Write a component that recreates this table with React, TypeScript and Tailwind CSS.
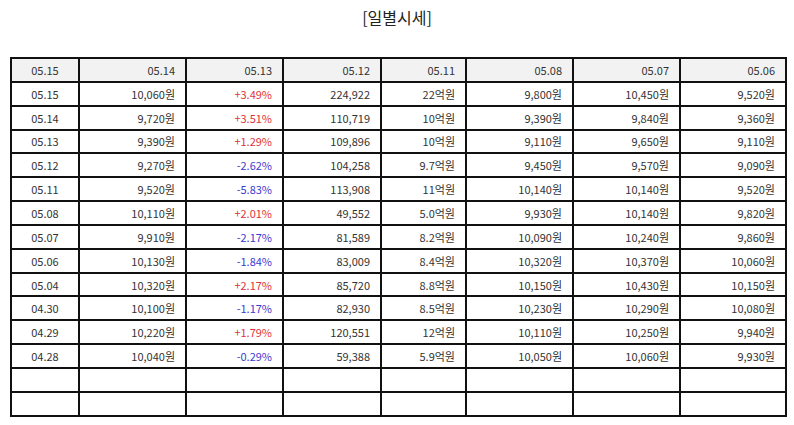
const headers = ["05.15", "05.14", "05.13", "05.12", "05.11", "05.08", "05.07", "05.06"];

const rows: string[][] = [
  ["05.15", "10,060원", "+3.49%", "224,922", "22억원", "9,800원", "10,450원", "9,520원"],
  ["05.14", "9,720원", "+3.51%", "110,719", "10억원", "9,390원", "9,840원", "9,360원"],
  ["05.13", "9,390원", "+1.29%", "109,896", "10억원", "9,110원", "9,650원", "9,110원"],
  ["05.12", "9,270원", "-2.62%", "104,258", "9.7억원", "9,450원", "9,570원", "9,090원"],
  ["05.11", "9,520원", "-5.83%", "113,908", "11억원", "10,140원", "10,140원", "9,520원"],
  ["05.08", "10,110원", "+2.01%", "49,552", "5.0억원", "9,930원", "10,140원", "9,820원"],
  ["05.07", "9,910원", "-2.17%", "81,589", "8.2억원", "10,090원", "10,240원", "9,860원"],
  ["05.06", "10,130원", "-1.84%", "83,009", "8.4억원", "10,320원", "10,370원", "10,060원"],
  ["05.04", "10,320원", "+2.17%", "85,720", "8.8억원", "10,150원", "10,430원", "10,150원"],
  ["04.30", "10,100원", "-1.17%", "82,930", "8.5억원", "10,230원", "10,290원", "10,080원"],
  ["04.29", "10,220원", "+1.79%", "120,551", "12억원", "10,110원", "10,250원", "9,940원"],
  ["04.28", "10,040원", "-0.29%", "59,388", "5.9억원", "10,050원", "10,060원", "9,930원"],
];

const widths = [68, 107, 97, 98, 85, 107, 107, 106];

function cellClass(i: number) {
  return i === 0
    ? "border-2 border-[#111] h-[23.85px] p-0 text-center"
    : "border-2 border-[#111] h-[23.85px] p-0 pr-[10px] text-right";
}

export default function App() {
  return (
    <div
      className="w-[794px] h-[425px] bg-white text-[#333]"
      style={{ fontFamily: '"Noto Sans CJK KR", "Noto Sans", sans-serif' }}
    >
      <h1 className="pt-[6px] text-center text-[16px] leading-[22px] font-normal text-[#222]">[일별시세]</h1>

      <table className="mt-[29px] ml-[10px] w-[776px] table-fixed border-collapse text-[11px] leading-[14px]">
        <colgroup>
          {widths.map((w, i) => (
            <col key={i} style={{ width: w }} />
          ))}
        </colgroup>
        <thead>
          <tr className="bg-[#f2f2f2]">
            {headers.map((h, i) => (
              <th key={h + i} className={cellClass(i) + " font-normal"}>
                {h}
              </th>
            ))}
          </tr>
        </thead>
        <tbody>
          {rows.map((row, r) => (
            <tr key={r}>
              {row.map((v, i) => {
                let color = "";
                if (i === 2) color = v.startsWith("+") ? " text-[#e0323c]" : " text-[#3b3bce]";
                return (
                  <td key={i} className={cellClass(i) + color}>
                    {v}
                  </td>
                );
              })}
            </tr>
          ))}
          {[0, 1].map((r) => (
            <tr key={"e" + r}>
              {widths.map((_, i) => (
                <td key={i} className={cellClass(i)}></td>
              ))}
            </tr>
          ))}
        </tbody>
      </table>
    </div>
  );
}
